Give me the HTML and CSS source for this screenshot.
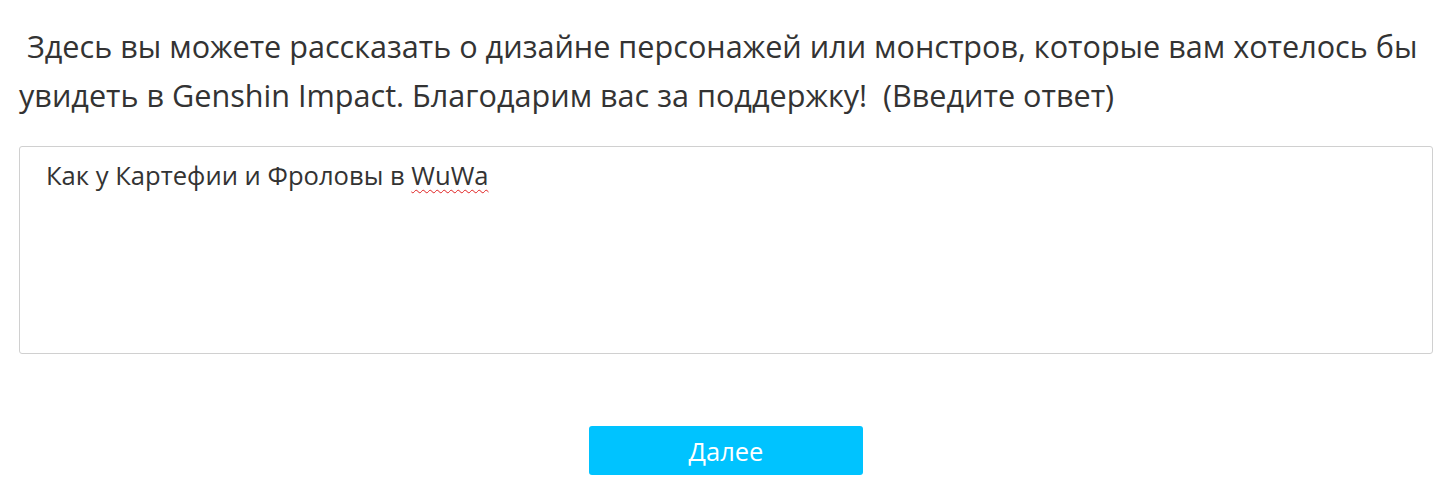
FILE: index.html
```html
<!DOCTYPE html>
<html lang="ru">
<head>
<meta charset="utf-8">
<link rel="stylesheet" href="styles.css">
</head>
<body>
<div class="page">
  <p class="question">&nbsp;Здесь вы можете рассказать о дизайне персонажей или монстров, которые вам хотелось бы увидеть в Genshin Impact. Благодарим вас за поддержку!&nbsp; (Введите ответ)</p>
  <div class="answer">Как у Картефии и Фроловы в <span class="misspelled">WuWa</span></div>
  <div class="actions">
    <button class="next">Далее</button>
  </div>
</div>
</body>
</html>
```
FILE: styles.css
```css
html, body {
  margin: 0;
  padding: 0;
  background: #fff;
}
.page {
  width: 1414px;
  padding: 22px 0 0 19px;
  font-family: "Open Sans", "Noto Sans", sans-serif;
  color: #333;
}
.question {
  margin: 0;
  font-size: 30.6px;
  line-height: 49px;
}
.answer {
  margin-top: 26px;
  box-sizing: border-box;
  height: 208px;
  border: 1px solid #d0d0d0;
  border-radius: 3px;
  padding: 11px 26px;
  font-size: 25.6px;
  line-height: 36px;
  color: #333;
}
.misspelled {
  text-decoration: underline wavy #e02020;
  text-decoration-thickness: 1px;
  text-underline-offset: 4px;
}
.actions {
  display: flex;
  justify-content: center;
  margin-top: 72px;
}
.next {
  width: 274px;
  height: 49px;
  border: none;
  border-radius: 3px;
  background: #00c3ff;
  color: #fff;
  font-family: "Open Sans", "Noto Sans", sans-serif;
  font-size: 25.5px;
  padding: 0;
}
```
